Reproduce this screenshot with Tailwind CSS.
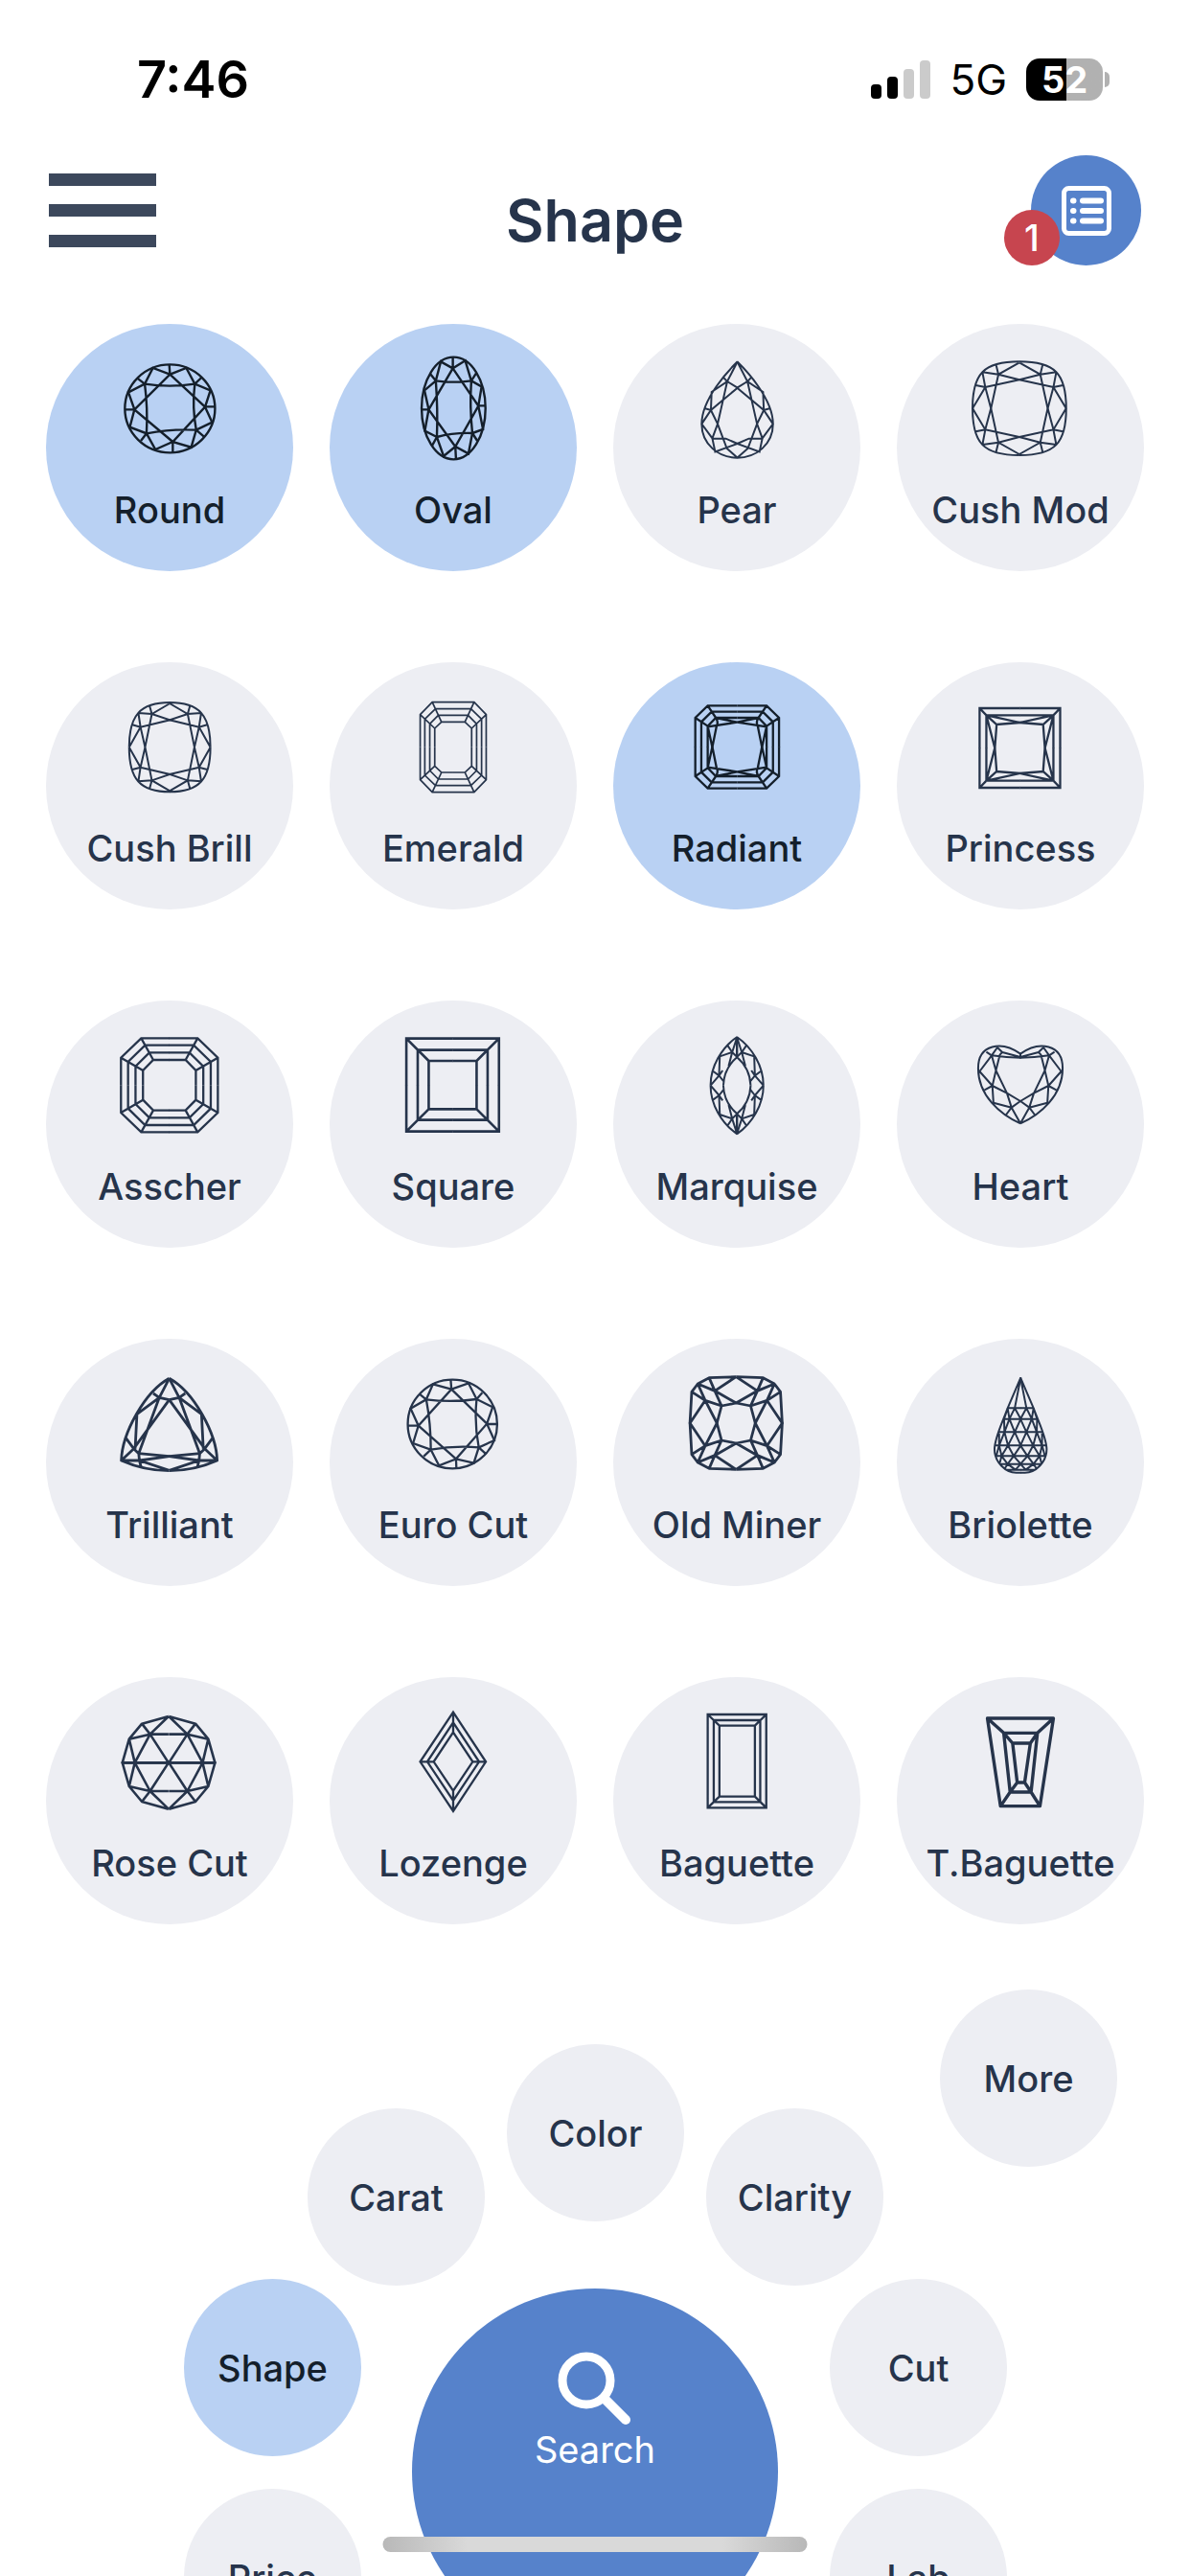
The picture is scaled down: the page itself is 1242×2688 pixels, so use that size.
<!DOCTYPE html>
<html lang="en">
<head>
<meta charset="utf-8">
<meta name="viewport" content="width=device-width, initial-scale=1">
<title>Shape</title>
<script src="https://cdn.jsdelivr.net/npm/@tailwindcss/browser@4"></script>
</head>
<body class="min-h-screen flex flex-col bg-white font-['Inter','Liberation_Sans',sans-serif] text-[#26344b]">

<!-- Status bar -->
<div class="flex items-center justify-between h-36 pt-[22px] pl-[143px] pr-[84px] text-black">
  <span class="text-[54px] leading-[60px] font-semibold">7:46</span>
  <div class="flex items-center gap-5">
    <svg class="w-[62px] h-10" viewBox="0 0 62 40" aria-hidden="true">
      <rect x="0" y="25" width="11" height="15" rx="4"/><rect x="17" y="17" width="11" height="23" rx="4"/>
      <rect x="34" y="9" width="11" height="31" rx="4" fill="#cbcbcb"/><rect x="51" y="0" width="11" height="40" rx="4" fill="#cbcbcb"/>
    </svg>
    <span class="text-[44px] leading-[48px]">5G</span>
    <div class="flex items-center gap-[2px]">
      <div class="flex items-center justify-center w-20 h-11 rounded-[14px] bg-linear-to-r from-black from-52% to-[#b1b1b1] to-52% text-white text-[38px] leading-[44px] font-bold">52</div>
      <div class="w-[5px] h-4 rounded-r-full bg-[#b1b1b1]"></div>
    </div>
  </div>
</div>

<!-- Title bar -->
<header class="grid grid-cols-[1fr_auto_1fr] items-center pt-[18px] pb-[61px] pl-[51px] pr-[51px]">
  <button type="button" aria-label="Menu" class="flex flex-col gap-[19px] w-28">
    <span class="h-[13px] bg-[#3c485c]"></span><span class="h-[13px] bg-[#3c485c]"></span><span class="h-[13px] bg-[#3c485c]"></span>
  </button>
  <h1 class="pt-5 text-[61px] leading-[72px] font-semibold">Shape</h1>
  <button type="button" aria-label="Saved list, 1 item" class="relative justify-self-end flex items-center justify-center size-[115px] rounded-full bg-[#5682cb]">
    <svg class="size-[52px]" viewBox="0 0 52 52" fill="none" stroke="#fff" stroke-linecap="round" aria-hidden="true">
      <rect x="2.5" y="2.5" width="47" height="47" rx="5" stroke-width="5"/>
      <path stroke-width="6" d="M22 15.5H41M22 26H41M22 36.5H41M12 15.5h.5M12 26h.5M12 36.5h.5"/>
    </svg>
    <span class="absolute bottom-0 -left-7 flex items-center justify-center size-[58px] rounded-full bg-[#c7454f] text-white text-[38px] leading-10 font-medium">1</span>
  </button>
</header>

<!-- Diamond shapes. Facets are drawn as one half or one quadrant and mirrored. -->
<main class="grid grid-cols-4 gap-x-[38px] gap-y-[95px] px-12 text-[38px] leading-[48px] font-medium">

  <button type="button" aria-pressed="true" class="aspect-square rounded-full flex flex-col items-center gap-[22px] pt-7 bg-[#b9d1f3] text-[#141f2b]">
    <svg class="size-[120px]" viewBox="208 106 324 360" preserveAspectRatio="none" fill="none" stroke="currentColor" stroke-width="2.4" aria-hidden="true">
      <ellipse vector-effect="non-scaling-stroke" cx="371" cy="287" rx="127" ry="138"/>
      <path vector-effect="non-scaling-stroke" d="M371 180 470 282 379 391 271 290ZM300 210Q370 222 441 210Q433 282 445 354Q375 350 305 365Q309 287 300 210M369 148 371 180 417 160 441 210 485 230 470 282 490 330 445 354 431 408 379 391 330 415 305 365 258 345 271 290 254 236 300 210 323 160 371 180M460 190 441 210M498 281H470M467 375 445 354M379 424V391M289 388 305 365M243 290H271M279 192 300 210"/>
    </svg>
    <span>Round</span>
  </button>

  <button type="button" aria-pressed="true" class="aspect-square rounded-full flex flex-col items-center gap-[22px] pt-7 bg-[#b9d1f3] text-[#141f2b]">
    <svg class="size-[120px]" viewBox="1008 106 324 360" preserveAspectRatio="none" fill="none" stroke="currentColor" stroke-width="2.4" aria-hidden="true">
      <ellipse vector-effect="non-scaling-stroke" cx="1171" cy="286" rx="90" ry="160"/>
      <path vector-effect="non-scaling-stroke" d="M1169 161 1241 279 1176 406 1101 290ZM1121 200Q1170 208 1221 200Q1216 280 1224 364Q1170 362 1124 376Q1127 290 1121 200M1169 126V161L1204 137 1221 200 1250 218 1241 279 1254 352 1224 364 1213 428 1176 406 1143 436 1124 376 1090 357 1101 290 1089 230 1121 200 1135 140 1169 161M1235 176 1221 200M1261 278H1241M1238 388 1224 364M1178 447 1176 406M1110 404 1124 376M1081 290H1101M1105 178 1121 200"/>
    </svg>
    <span>Oval</span>
  </button>

  <button type="button" aria-pressed="false" class="aspect-square rounded-full flex flex-col items-center gap-[22px] pt-7 bg-[#edeef3]">
    <svg class="size-[120px]" viewBox="214 106 324 360" preserveAspectRatio="none" fill="none" stroke="currentColor" stroke-width="2" aria-hidden="true">
      <path id="pear" vector-effect="non-scaling-stroke" d="M377 140C400 165 478 255 478 335C478 400 430 441 377 441M377 140 406 202 433 335 407 412 377 441M418 188 406 202 450 235 452 292 468 287M377 222 406 202M377 222 452 292 478 335 448 380 433 335 452 292M448 380 440 422 377 397 410 381H448"/>
      <use href="#pear" transform="translate(755 0) scale(-1 1)"/>
    </svg>
    <span>Pear</span>
  </button>

  <button type="button" aria-pressed="false" class="aspect-square rounded-full flex flex-col items-center gap-[22px] pt-7 bg-[#edeef3]">
    <svg class="size-[120px]" viewBox="1015 106 324 360" preserveAspectRatio="none" fill="none" stroke="currentColor" stroke-width="2" aria-hidden="true">
      <g id="cushmod">
        <path id="cushmod-q" vector-effect="non-scaling-stroke" d="M1174 140C1275 140 1306 178 1306 287M1174 143 1233 180 1240 148M1278 173 1233 180 1174 197 1270 220 1297 214M1278 173 1270 220 1306 287M1233 180 1254 287 1270 220"/>
        <use href="#cushmod-q" transform="translate(2348 0) scale(-1 1)"/>
      </g>
      <use href="#cushmod" transform="translate(0 573) scale(1 -1)"/>
    </svg>
    <span>Cush Mod</span>
  </button>

  <button type="button" aria-pressed="false" class="aspect-square rounded-full flex flex-col items-center gap-[22px] pt-7 bg-[#edeef3]">
    <svg class="size-[120px]" viewBox="208 102 324 360" preserveAspectRatio="none" fill="none" stroke="currentColor" stroke-width="2" aria-hidden="true">
      <g id="cushbrill">
        <path id="cushbrill-q" vector-effect="non-scaling-stroke" d="M370 144C454 144 485 184 485 284M370 147 421 180 428 152M459 177 421 180 370 199 453 221 476 214M459 177 453 221 485 284M421 180 440 284 453 221"/>
        <use href="#cushbrill-q" transform="translate(741 0) scale(-1 1)"/>
      </g>
      <use href="#cushbrill" transform="translate(0 568) scale(1 -1)"/>
    </svg>
    <span>Cush Brill</span>
  </button>

  <button type="button" aria-pressed="false" class="aspect-square rounded-full flex flex-col items-center gap-[22px] pt-7 bg-[#edeef3]">
    <svg class="size-[120px]" viewBox="1008 102 324 360" preserveAspectRatio="none" fill="none" stroke="currentColor" stroke-width="1.7" aria-hidden="true">
      <g id="emerald">
        <path id="emerald-q" vector-effect="non-scaling-stroke" d="M1170 143H1111L1077 182V284M1170 164H1120L1090 196V284M1170 184H1128L1104 211V284M1170 205H1137L1118 225V284M1111 143 1137 205M1077 182 1118 225"/>
        <use href="#emerald-q" transform="translate(2340 0) scale(-1 1)"/>
      </g>
      <use href="#emerald" transform="translate(0 568) scale(1 -1)"/>
    </svg>
    <span>Emerald</span>
  </button>

  <button type="button" aria-pressed="true" class="aspect-square rounded-full flex flex-col items-center gap-[22px] pt-7 bg-[#b9d1f3] text-[#141f2b]">
    <svg class="size-[120px]" viewBox="214 102 324 360" preserveAspectRatio="none" fill="none" stroke="currentColor" stroke-width="2.3" aria-hidden="true">
      <g id="radiant">
        <path id="radiant-q" vector-effect="non-scaling-stroke" d="M377 154H294L259 192V284M377 173H305L276 205V284M377 192H317L294 218V284M294 154 317 192M259 192 294 218M317 192 377 206 294 220M317 192Q325 205 319 218L307 284 294 218"/>
        <use href="#radiant-q" transform="translate(754 0) scale(-1 1)"/>
      </g>
      <use href="#radiant" transform="translate(0 567) scale(1 -1)"/>
    </svg>
    <span>Radiant</span>
  </button>

  <button type="button" aria-pressed="false" class="aspect-square rounded-full flex flex-col items-center gap-[22px] pt-7 bg-[#edeef3]">
    <svg class="size-[120px]" viewBox="1015 102 324 360" preserveAspectRatio="none" fill="none" stroke="currentColor" stroke-width="2.3" aria-hidden="true">
      <g id="princess">
        <path id="princess-q" vector-effect="non-scaling-stroke" d="M1176 162H1062V287M1176 184H1081V287M1062 162 1081 184 1110 213 1176 207 1081 184 1105 287 1110 213"/>
        <use href="#princess-q" transform="translate(2351 0) scale(-1 1)"/>
      </g>
      <use href="#princess" transform="translate(0 573) scale(1 -1)"/>
    </svg>
    <span>Princess</span>
  </button>

  <button type="button" aria-pressed="false" class="aspect-square rounded-full flex flex-col items-center gap-[22px] pt-7 bg-[#edeef3]">
    <svg class="size-[120px]" viewBox="208 97 324 360" preserveAspectRatio="none" fill="none" stroke="currentColor" stroke-width="2.3" aria-hidden="true">
      <g id="asscher">
        <path id="asscher-q" vector-effect="non-scaling-stroke" d="M370 131H290L233 192V278M370 153H301L253 205V278M370 176H313L274 219V278M370 199H324L295 232V278M290 131 324 199M233 192 295 232"/>
        <use href="#asscher-q" transform="translate(739 0) scale(-1 1)"/>
      </g>
      <use href="#asscher" transform="translate(0 556) scale(1 -1)"/>
    </svg>
    <span>Asscher</span>
  </button>

  <button type="button" aria-pressed="false" class="aspect-square rounded-full flex flex-col items-center gap-[22px] pt-7 bg-[#edeef3]">
    <svg class="size-[120px]" viewBox="1008 97 324 360" preserveAspectRatio="none" fill="none" stroke="currentColor" stroke-width="2.6" aria-hidden="true">
      <g id="square">
        <path id="square-q" vector-effect="non-scaling-stroke" d="M1169 132H1038V278M1169 168H1070V278M1169 202H1101V278M1038 132 1101 202"/>
        <use href="#square-q" transform="translate(2337 0) scale(-1 1)"/>
      </g>
      <use href="#square" transform="translate(0 555) scale(1 -1)"/>
    </svg>
    <span>Square</span>
  </button>

  <button type="button" aria-pressed="false" class="aspect-square rounded-full flex flex-col items-center gap-[22px] pt-7 bg-[#edeef3]">
    <svg class="size-[120px]" viewBox="214 97 324 360" preserveAspectRatio="none" fill="none" stroke="currentColor" stroke-width="2" stroke-linejoin="round" aria-hidden="true">
      <g id="marquise">
        <path id="marquise-q" vector-effect="non-scaling-stroke" d="M376 127C420 160 451 220 451 279M376 190Q413 225 415 279M376 127V190M376 127 390 175 404 152M376 190 390 175 425 188 427 248 443 235M390 175 400 218M417 232 427 248 451 279M427 248 415 265"/>
        <use href="#marquise-q" transform="translate(753 0) scale(-1 1)"/>
      </g>
      <use href="#marquise" transform="translate(0 558) scale(1 -1)"/>
    </svg>
    <span>Marquise</span>
  </button>

  <button type="button" aria-pressed="false" class="aspect-square rounded-full flex flex-col items-center gap-[22px] pt-7 bg-[#edeef3]">
    <svg class="size-[120px]" viewBox="1015 97 324 360" preserveAspectRatio="none" fill="none" stroke="currentColor" stroke-width="2" stroke-linejoin="round" aria-hidden="true">
      <path id="heart" vector-effect="non-scaling-stroke" d="M1177 398C1234 370 1296 310 1296 225C1296 150 1230 138 1177 180V192Q1215 192 1258 185L1273 174M1177 190 1228 175 1242 160 1258 185 1292 235 1256 280 1278 293M1228 175 1235 183 1246 232 1258 185M1256 280 1246 232 1215 303 1202 348 1177 398M1256 280 1215 303 1177 328 1202 348 1217 370M1202 348 1253 333 1256 280"/>
      <use href="#heart" transform="translate(2354 0) scale(-1 1)"/>
    </svg>
    <span>Heart</span>
  </button>

  <button type="button" aria-pressed="false" class="aspect-square rounded-full flex flex-col items-center gap-[22px] pt-7 bg-[#edeef3]">
    <svg class="size-[120px]" viewBox="208 108 324 360" preserveAspectRatio="none" fill="none" stroke="currentColor" stroke-width="2.8" stroke-linejoin="round" aria-hidden="true">
      <path id="trilliant" vector-effect="non-scaling-stroke" d="M369 148C438 190 502 320 504 405Q440 437 369 437M369 148 397 208 414 195M369 215 397 208 460 260 465 368M397 208 455 383M369 215 469 368 491 335M469 368 504 405 453 405 369 392 455 383 469 368M455 383 453 405 448 428M453 405 369 436"/>
      <use href="#trilliant" transform="translate(738 0) scale(-1 1)"/>
    </svg>
    <span>Trilliant</span>
  </button>

  <button type="button" aria-pressed="false" class="aspect-square rounded-full flex flex-col items-center gap-[22px] pt-7 bg-[#edeef3]">
    <svg class="size-[120px]" viewBox="1008 108 324 360" preserveAspectRatio="none" fill="none" stroke="currentColor" stroke-width="2.3" aria-hidden="true">
      <ellipse vector-effect="non-scaling-stroke" cx="1168" cy="291" rx="126" ry="139"/>
      <path vector-effect="non-scaling-stroke" d="M1165 182 1265 290 1178 400 1072 296ZM1094 214Q1165 224 1236 213Q1229 290 1242 364Q1172 358 1107 371Q1107 290 1094 214M1163 152 1165 182 1213 163 1236 213 1281 238 1265 290 1286 342 1242 364 1228 413 1178 400 1130 421 1107 371 1057 351 1072 296 1050 242 1094 214 1113 166 1165 182M1252 193 1236 213M1294 291H1265M1263 385 1242 364M1179 430 1178 400M1087 392 1107 371M1041 296H1072M1075 197 1094 214"/>
    </svg>
    <span>Euro Cut</span>
  </button>

  <button type="button" aria-pressed="false" class="aspect-square rounded-full flex flex-col items-center gap-[22px] pt-7 bg-[#edeef3]">
    <svg class="size-[120px]" viewBox="214 108 324 360" preserveAspectRatio="none" fill="none" stroke="currentColor" stroke-width="2.8" stroke-linejoin="round" aria-hidden="true">
      <g id="miner">
        <path id="miner-q" vector-effect="non-scaling-stroke" d="M374 143 450 146 482 165 499 190 504 288 461 217 499 190M374 143 434 187 374 225 415 234 428 288 461 217 482 165 434 187 450 146M434 187 415 234 461 217"/>
        <use href="#miner-q" transform="translate(748 0) scale(-1 1)"/>
      </g>
      <use href="#miner" transform="translate(0 576) scale(1 -1)"/>
    </svg>
    <span>Old Miner</span>
  </button>

  <button type="button" aria-pressed="false" class="aspect-square rounded-full flex flex-col items-center gap-[22px] pt-7 bg-[#edeef3]">
    <svg class="size-[120px]" viewBox="1015 108 324 360" preserveAspectRatio="none" fill="none" stroke="currentColor" stroke-width="2" stroke-linejoin="round" aria-hidden="true">
      <path id="briolette" vector-effect="non-scaling-stroke" d="M1177 145 1214 241C1232 295 1251 335 1251 370C1251 410 1220 443 1190 443H1177M1177 145 1194 241 1177 275 1194 316 1177 358 1197 391 1177 416 1192 434M1194 241 1209 275 1194 316 1213 358 1197 391 1214 416 1192 434M1214 241 1209 275 1223 316 1213 358 1231 391 1214 416 1222 430M1214 241 1224 275 1223 316 1238 358 1231 391 1236 412M1238 320V358L1246 391M1177 241H1214M1177 275H1225M1177 316H1238M1177 358H1250M1177 391H1249M1177 416H1237M1177 434H1218"/>
      <use href="#briolette" transform="translate(2355 0) scale(-1 1)"/>
    </svg>
    <span>Briolette</span>
  </button>

  <button type="button" aria-pressed="false" class="aspect-square rounded-full flex flex-col items-center gap-[22px] pt-7 bg-[#edeef3]">
    <svg class="size-[120px]" viewBox="208 104 324 360" preserveAspectRatio="none" fill="none" stroke="currentColor" stroke-width="2.6" stroke-linejoin="round" aria-hidden="true">
      <g id="rose">
        <path id="rose-q" vector-effect="non-scaling-stroke" d="M368 143 443 166 479 214 498 288H368L420 199 463 288 479 214 420 199 443 166M368 143 420 199H368"/>
        <use href="#rose-q" transform="translate(735 0) scale(-1 1)"/>
      </g>
      <use href="#rose" transform="translate(0 576) scale(1 -1)"/>
    </svg>
    <span>Rose Cut</span>
  </button>

  <button type="button" aria-pressed="false" class="aspect-square rounded-full flex flex-col items-center gap-[22px] pt-7 bg-[#edeef3]">
    <svg class="size-[120px]" viewBox="1008 104 324 360" preserveAspectRatio="none" fill="none" stroke="currentColor" stroke-width="2.3" aria-hidden="true">
      <path vector-effect="non-scaling-stroke" d="M1170 130 1262 285 1170 440 1077 285ZM1170 162 1243 285 1170 407 1097 285ZM1170 193 1225 285 1170 376 1115 285ZM1170 130V193M1170 376V440M1077 285H1115M1225 285H1262"/>
    </svg>
    <span>Lozenge</span>
  </button>

  <button type="button" aria-pressed="false" class="aspect-square rounded-full flex flex-col items-center gap-[22px] pt-7 bg-[#edeef3]">
    <svg class="size-[120px]" viewBox="214 104 324 360" preserveAspectRatio="none" fill="none" stroke="currentColor" stroke-width="2.3" aria-hidden="true">
      <path vector-effect="non-scaling-stroke" d="M294 137H459V429H294ZM311 155H442V411H311ZM327 172H427V394H327ZM294 137 327 172M459 137 427 172M294 429 327 394M459 429 427 394"/>
    </svg>
    <span>Baguette</span>
  </button>

  <button type="button" aria-pressed="false" class="aspect-square rounded-full flex flex-col items-center gap-[22px] pt-7 bg-[#edeef3]">
    <svg class="size-[120px]" viewBox="1015 104 324 360" preserveAspectRatio="none" fill="none" stroke="currentColor" stroke-width="3.4" stroke-linejoin="round" aria-hidden="true">
      <path vector-effect="non-scaling-stroke" d="M1084 149H1270L1232 424H1121ZM1130 195H1225L1207 380H1148ZM1155 227H1205L1189 350H1168ZM1084 149 1130 195 1155 227M1270 149 1225 195 1205 227M1121 424 1148 380 1168 350M1232 424 1207 380 1189 350"/>
    </svg>
    <span>T.Baguette</span>
  </button>
</main>

<!-- Radial filter menu, placed around the middle of the screen -->
<nav aria-label="Filters" class="relative flex-1 min-h-[680px] overflow-hidden text-[38px] leading-[48px] font-medium">
  <button type="button" class="absolute top-[68px] right-[76px] size-[185px] rounded-full bg-[#edeef3]">More</button>
  <div class="absolute top-0 left-1/2">
    <button type="button" class="absolute top-[125px] -left-[92px] size-[185px] rounded-full bg-[#edeef3]">Color</button>
    <button type="button" class="absolute top-[192px] -left-[300px] size-[185px] rounded-full bg-[#edeef3]">Carat</button>
    <button type="button" class="absolute top-[192px] left-[116px] size-[185px] rounded-full bg-[#edeef3]">Clarity</button>
    <button type="button" aria-current="true" class="absolute top-[370px] -left-[429px] size-[185px] rounded-full bg-[#b9d1f3] text-[#141f2b]">Shape</button>
    <button type="button" class="absolute top-[370px] left-[245px] size-[185px] rounded-full bg-[#edeef3]">Cut</button>
    <button type="button" class="absolute top-[589px] -left-[429px] size-[185px] rounded-full bg-[#edeef3]">Price</button>
    <button type="button" class="absolute top-[589px] left-[245px] size-[185px] rounded-full bg-[#edeef3]">Lab</button>
    <button type="button" class="absolute top-[380px] -left-[191px] flex flex-col items-center pt-16 size-[382px] rounded-full bg-[#5682cb] text-white font-normal">
      <svg class="size-20" viewBox="0 0 80 80" fill="none" stroke="#fff" aria-hidden="true">
        <circle cx="31" cy="32" r="25" stroke-width="9"/><path d="M50 51 72 73" stroke-width="10" stroke-linecap="round"/>
      </svg>
      <span>Search</span>
    </button>
  </div>
  <div class="absolute bottom-[25px] left-1/2 -translate-x-1/2 w-[443px] h-4 rounded-full bg-[linear-gradient(to_right,#b8b8b8,#d9d9d9_20%,#d9d9d9_80%,#b8b8b8)]"></div>
</nav>
</body>
</html>
